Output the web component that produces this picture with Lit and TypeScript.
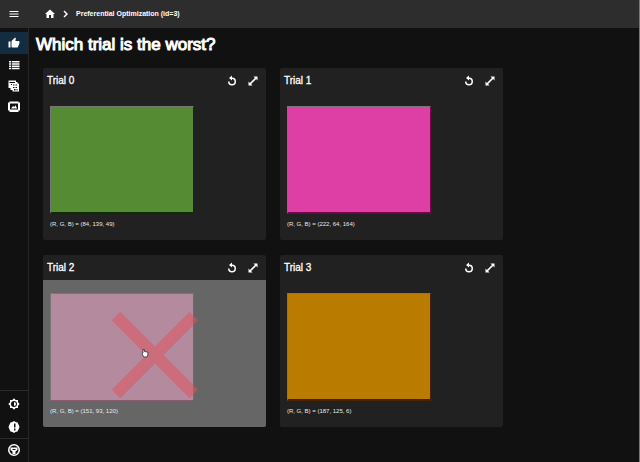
import { LitElement, html, css, svg } from "lit";
import { customElement, property, state } from "lit/decorators.js";
import { classMap } from "lit/directives/class-map.js";
import { styleMap } from "lit/directives/style-map.js";

interface Trial {
  id: number;
  rgb: [number, number, number];
  fill: string;
  edge: string;
}

const TRIALS: Trial[] = [
  { id: 0, rgb: [84, 139, 49], fill: "#558b33", edge: "#0c2e00" },
  { id: 1, rgb: [222, 64, 164], fill: "#de3fa4", edge: "#78004c" },
  { id: 2, rgb: [151, 93, 120], fill: "#b48a9e", edge: "#8a5a70" },
  { id: 3, rgb: [187, 125, 6], fill: "#b97c00", edge: "#4a2000" },
];

const ICONS = {
  menu: svg`<path d="M3 18h18v-2H3v2zm0-5h18v-2H3v2zm0-7v2h18V6H3z"/>`,
  home: svg`<path d="M10 20v-6h4v6h5v-8h3L12 3 2 12h3v8z"/>`,
  chevron: svg`<path d="M9 5 7 7l5 5-5 5 2 2 7-7z"/>`,
  thumb: svg`<path d="M1 21h4V9H1v12zm22-11c0-1.100-.9-2-2-2h-6.310l.95-4.570.03-.32c0-.41-.17-.79-.44-1.060L14.170 1 7.590 7.590C7.220 7.950 7 8.450 7 9v10c0 1.100.9 2 2 2h9c.83 0 1.540-.5 1.840-1.220l3.020-7.050c.09-.23.14-.47.14-.73v-2z"/>`,
  list: svg`<path d="M2 4h4v3H2zM2 8.500h4v3H2zM2 13h4v3H2zM2 17.500h4v3H2zM7.500 4H23v3H7.500zM7.500 8.500H23v3H7.500zM7.500 13H23v3H7.500zM7.500 17.500H23v3H7.500z"/>`,
  table: svg`<path fill-rule="evenodd" d="M1 1h15v3h3v3h3v16H9v-3H5v-4H1zM3 4v2h11V4zm3 4v2h2V8zm4 1v2h3V9zm5 0v2h3V9zm-5 5v2h3v-2zm5 0v2h3v-2zm-3 4v3h3v-3zm5 0v3h2v-3z"/>`,
  image: svg`<path fill-rule="evenodd" d="M3 1h18v2h3v16h-3v3H3v-3H0V3h3zm1 4v12h16V5zm2 10 4-5 3 2 2-4 3 7z"/>`,
  theme: svg`<path fill-rule="evenodd" d="M20 8.690V4h-4.690L12 .69 8.690 4H4v4.690L.69 12 4 15.310V20h4.690L12 23.310 15.310 20H20v-4.690L23.310 12zM12 18a6 6 0 1 1 0-12 6 6 0 0 1 0 12zm0-10v8a4 4 0 0 0 0-8z"/>`,
  alert: svg`<path fill-rule="evenodd" d="M12 0l3 2 4 1 2 4 2 5-2 5-2 4-4 1-3 2-3-2-4-1-2-4-2-5 2-5 2-4 4-1zm0 5v8h3V5zm0 10v4h3v-4z"/>`,
  github: svg`<path fill-rule="evenodd" d="M12 0a12 12 0 1 0 0 24 12 12 0 0 0 0-24zm0 3a9 9 0 1 1 0 18 9 9 0 0 1 0-18zM5 7h14v5l-4 3v5H9v-5l-4-3zm4 3v2h6v-2z"/>`,
  replay: svg`<path d="M12 5V1L6 6l6 5V8a5 5 0 1 1-5 5H4a8 8 0 1 0 8-8z"/>`,
  expand: svg`<path d="M21 11V3h-8l2.800 2.800-10 10L3 13v8h8l-2.800-2.800 10-10z"/>`,
};

type IconName = keyof typeof ICONS;

@customElement("ui-icon")
class UiIcon extends LitElement {
  static styles = css`
    :host { display: block; width: 12px; height: 12px; flex: none; }
    svg { display: block; width: 100%; height: 100%; fill: currentColor; }
  `;
  @property() name: IconName = "menu";
  render() {
    return html`<svg viewBox="0 0 24 24" aria-hidden="true">${ICONS[this.name]}</svg>`;
  }
}

@customElement("trial-card")
class TrialCard extends LitElement {
  static styles = css`
    :host { display: block; }
    .card {
      background: #212121;
      border-radius: 2px;
      overflow: hidden;
    }
    header {
      display: flex;
      align-items: center;
      height: 25px;
      padding: 0 7px 0 4px;
      gap: 9px;
    }
    h2 {
      flex: 1;
      margin: 0;
      font-size: 10px;
      line-height: 12px;
      font-weight: 400;
      color: #fff;
      -webkit-text-stroke: 0.3px #fff;
    }
    button {
      border: 0;
      padding: 0;
      background: none;
      color: #fff;
      cursor: pointer;
    }
    .body {
      position: relative;
      padding: 13px 7px 10px;
      cursor: pointer;
    }
    .swatch {
      width: 69%;
      aspect-ratio: 4 / 3;
      box-sizing: border-box;
      border: 1px solid #777;
      border-bottom-width: 2px;
    }
    p {
      margin: 5px 0 0;
      font-size: 6px;
      line-height: 11px;
      color: #e8e8e8;
    }
    .hovered { background: #666; }
    .hovered .swatch { border-bottom-width: 1px; }
    .cross {
      position: absolute;
      inset: 0;
      width: 100%;
      height: 100%;
    }
    .bars { stroke: #e4505a; stroke-opacity: 0.5; stroke-width: 12; fill: none; }
    .hand { fill: #fff; stroke: #444; stroke-width: 1; }
  `;
  @property({ attribute: false }) trial!: Trial;
  @property({ type: Boolean }) hovered = false;

  render() {
    const { id, rgb, fill, edge } = this.trial;
    const swatch = { backgroundColor: fill, borderBottomColor: edge, borderRightColor: edge };
    return html`
      <article class="card">
        <header>
          <h2>Trial ${id}</h2>
          <button aria-label="Undo"><ui-icon name="replay"></ui-icon></button>
          <button aria-label="Expand"><ui-icon name="expand"></ui-icon></button>
        </header>
        <div class=${classMap({ body: true, hovered: this.hovered })}>
          <div class="swatch" style=${styleMap(swatch)}></div>
          <p>(R, G, B) = (${rgb.join(", ")})</p>
          ${this.hovered
            ? html`<svg class="cross" viewBox="0 0 223 147" aria-hidden="true">
                <path class="bars" d="M73 36 151 114M151 36 73 114" />
                <path class="hand" d="M100 69.500h1.500v2l3.500.5v3l-1 2h-3l-2-3 1-1z" />
              </svg>`
            : null}
        </div>
      </article>
    `;
  }
}

@customElement("app-root")
class AppRoot extends LitElement {
  static styles = css`
    :host {
      display: flex;
      flex-direction: column;
      box-sizing: border-box;
      min-height: 100vh;
      background: #111;
      border-right: 1px solid #777;
      color: #fff;
      font-family: "Liberation Sans", Arial, sans-serif;
    }
    .top {
      display: flex;
      align-items: center;
      height: 28px;
      background: #2d2d2d;
      padding-left: 8px;
    }
    .top button, nav button {
      border: 0;
      padding: 0;
      background: none;
      color: #fff;
    }
    .crumbs { display: flex; align-items: center; margin-left: 24px; gap: 4px; }
    .crumbs a { color: #fff; }
    .crumbs span { font-size: 7px; line-height: 12px; font-weight: 700; }
    .main { flex: 1; display: flex; }
    nav {
      width: 28px;
      flex: none;
      border-right: 1px solid #262626;
      display: flex;
      flex-direction: column;
      padding: 4px 0 2px;
    }
    nav button {
      display: flex;
      align-items: center;
      justify-content: center;
      height: 21px;
    }
    nav .active { background: #122c42; height: 22px; }
    .foot { margin-top: auto; display: flex; flex-direction: column; }
    .foot button { height: 22px; }
    .foot button:first-child, .foot button:last-child { border-top: 1px solid #2c2c2c; }
    .foot button:first-child { height: 26px; }
    main { flex: 1; padding: 8px 7px; }
    h1 {
      margin: 0;
      font-size: 17px;
      line-height: 18px;
      font-weight: 400;
      -webkit-text-stroke: 1px #fff;
    }
    .grid {
      display: grid;
      grid-template-columns: repeat(2, 38.3%);
      gap: 15px 14px;
      padding: 14px 7px;
    }
  `;
  @state() private hoveredId = 2;

  render() {
    const nav: [IconName, string][] = [["thumb", "Preference"], ["list", "Trials"], ["table", "Table"], ["image", "Artifacts"]];
    const foot: [IconName, string][] = [["theme", "Theme"], ["alert", "Alerts"], ["github", "GitHub"]];
    return html`
      <div class="top">
        <button aria-label="Menu"><ui-icon name="menu"></ui-icon></button>
        <div class="crumbs">
          <a href="#" aria-label="Home"><ui-icon name="home"></ui-icon></a>
          <ui-icon name="chevron"></ui-icon>
          <span>Preferential Optimization (id=3)</span>
        </div>
      </div>
      <div class="main">
        <nav>
          ${nav.map(([n, l], i) => html`<button class=${classMap({ active: i === 0 })} aria-label=${l}><ui-icon name=${n}></ui-icon></button>`)}
          <div class="foot">
            ${foot.map(([n, l]) => html`<button aria-label=${l}><ui-icon name=${n}></ui-icon></button>`)}
          </div>
        </nav>
        <main>
          <h1>Which trial is the worst?</h1>
          <div class="grid">
            ${TRIALS.map((t) => html`<trial-card .trial=${t} .hovered=${t.id === this.hoveredId}></trial-card>`)}
          </div>
        </main>
      </div>
    `;
  }
}
